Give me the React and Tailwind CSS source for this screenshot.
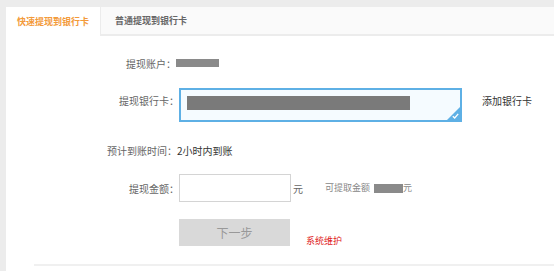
const App = () => {
  const font = { fontFamily: '"Noto Sans CJK SC", "Noto Sans", sans-serif' };

  return (
    <div
      className="w-[554px] h-[271px] overflow-hidden bg-[#ececec] pl-[6px] pt-[7px]"
      style={font}
    >
      <div className="h-full flex flex-col">
        {/* tabs */}
        <div className="flex h-[29px] shrink-0">
          <div className="w-[94px] h-full bg-white flex items-center justify-center text-[9px] font-bold text-[#f39a3a]">
            快速提现到银行卡
          </div>
          <div className="flex-1 h-[27px] ml-px bg-[#fafafa] flex items-center pl-[14px] text-[9px] font-bold text-[#666]">
            普通提现到银行卡
          </div>
        </div>

        {/* form */}
        <div className="flex-1 bg-white flex flex-col">
          <div className="flex items-center h-[20px] mt-[17px]">
            <div className="w-[170px] text-right text-[10px] text-[#666]">提现账户：</div>
            <div className="w-[43px] h-[8px] bg-[#8a8a8a]" />
          </div>

          <div className="flex items-start h-[34px] mt-[15px]">
            <div className="w-[173px] pt-[6px] text-right text-[10px] leading-[14px] text-[#666]">
              提现银行卡：
            </div>
            <div className="relative w-[283px] h-[34px] border-2 border-[#5eb0e5] bg-[#f5fbff] pl-[6px] pt-[6px] overflow-hidden">
              <div className="w-[223px] h-[14px] bg-[#7a7a7a]" />
              <div className="absolute right-0 bottom-0 w-0 h-0 border-l-[13px] border-l-transparent border-b-[13px] border-b-[#5eb0e5]" />
              <svg className="absolute right-[1px] bottom-[1px]" width="7" height="6" viewBox="0 0 7 6">
                <path d="M0.8 3.2 L2.7 5 L6.2 0.8" fill="none" stroke="#ffffff" strokeWidth="1.3" />
              </svg>
            </div>
            <div className="ml-[20px] pt-[6px] text-[10px] leading-[14px] text-[#333]">添加银行卡</div>
          </div>

          <div className="flex items-center h-[20px] mt-[18px]">
            <div className="w-[171px] text-right text-[10px] text-[#666]">预计到账时间：</div>
            <div className="text-[10px] text-[#333]">2小时内到账</div>
          </div>

          <div className="flex items-center h-[28px] mt-[14px]">
            <div className="w-[173px] text-right text-[10px] text-[#666]">提现金额：</div>
            <div className="w-[112px] h-[28px] border border-[#d4d4d4] bg-white" />
            <div className="ml-[2px] text-[10px] text-[#666]">元</div>
            <div className="ml-[22px] text-[9px] text-[#888]">可提取金额</div>
            <div className="ml-[4px] w-[29px] h-[9px] bg-[#8a8a8a]" />
            <div className="text-[9px] text-[#888]">元</div>
          </div>

          <div className="flex items-start h-[27px] mt-[17px]">
            <div className="w-[173px]" />
            <div className="w-[111px] h-[27px] bg-[#d9d9d9] flex items-center justify-center text-[12px] text-[#999]">
              下一步
            </div>
            <div className="ml-[16px] mt-[15px] text-[9px] leading-[14px] text-[#e0201a]">系统维护</div>
          </div>

          <div className="ml-[28px] mt-[18px] h-[2px] bg-[#f0f0f0]" />
        </div>
      </div>
    </div>
  );
};

export default App;
